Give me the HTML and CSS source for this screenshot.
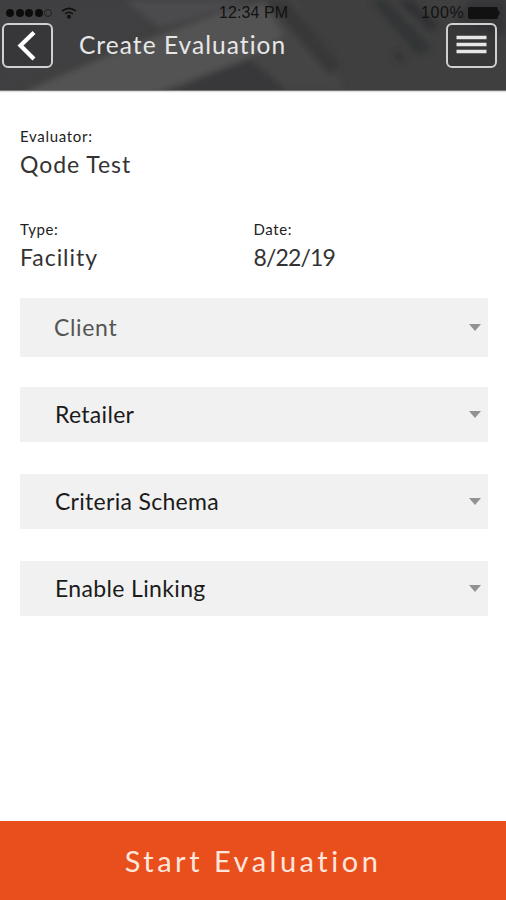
FILE: index.html
```html
<!DOCTYPE html>
<html lang="en">
<head>
<meta charset="utf-8">
<title>Create Evaluation</title>
<link rel="stylesheet" href="styles.css">
</head>
<body>
<header class="header">
  <svg class="backdrop" viewBox="0 0 506 90" preserveAspectRatio="none" aria-hidden="true">
    <defs><filter id="soft"><feGaussianBlur stdDeviation="3"/></filter></defs>
    <rect width="506" height="90" fill="#3f3f40"/>
    <g filter="url(#soft)">
      <path d="M0 0H130L145 27L60 68L0 92Z" fill="#414142"/>
      <path d="M125 0H250L195 18L160 28Z" fill="#4b4b4d"/>
      <path d="M28 90L120 50L222 12L268 2L284 36L250 58L170 88L150 96H28Z" fill="#525252"/>
      <path d="M165 96L215 72L250 58L290 96Z" fill="#38393b"/>
      <path d="M262 0H295L345 90H290L250 60L284 36Z" fill="#444445"/>
      <path d="M265 0L288 0L340 65L330 75Z" fill="#373738"/>
      <path d="M370 0H386L432 48L418 56Z" fill="#333536"/>
      <path d="M396 0H412L440 26L430 32Z" fill="#333334"/>
      <path d="M398 50L405 60L400 63L394 56Z" fill="#303031"/>
      <path d="M470 0H506V36L455 22Z" fill="#363637"/>
    </g>
  </svg>
  <div class="status">
    <span class="signal"><i></i><i></i><i></i><i></i><i class="empty"></i></span>
    <svg class="wifi" viewBox="0 0 16 12" aria-hidden="true">
      <path d="M1 4.2Q8-1.5 15 4.2M4 7Q8 3.6 12 7" fill="none" stroke="#111" stroke-width="1.6"/>
      <circle cx="8" cy="9.7" r="2" fill="#111"/>
    </svg>
    <span class="clock">12:34 PM</span>
    <span class="percent">100%</span>
    <svg class="battery" viewBox="0 0 34 12" aria-hidden="true">
      <rect width="30" height="12" rx="2" fill="#111"/><path d="M30 3Q33.500 6 30 9Z" fill="#111"/>
    </svg>
  </div>
  <div class="toolbar">
    <button class="icon-button" aria-label="Back">
      <svg viewBox="0 0 51 45" aria-hidden="true"><path d="M32 9.500L18.500 22.500L32 36" fill="none" stroke="#fff" stroke-width="4.200"/></svg>
    </button>
    <h1 class="title">Create Evaluation</h1>
    <button class="icon-button" aria-label="Menu">
      <svg viewBox="0 0 51 45" aria-hidden="true"><path d="M10.500 14.500H40.500M10.500 21.500H40.500M10.500 28.500H40.500" fill="none" stroke="#e6e6e6" stroke-width="3.500"/></svg>
    </button>
  </div>
</header>
<main class="content">
  <div class="field"><div class="label evaluator">Evaluator:</div><div class="value name">Qode Test</div></div>
  <div class="row">
    <div class="field"><div class="label">Type:</div><div class="value facility">Facility</div></div>
    <div class="field"><div class="label">Date:</div><div class="value date">8/22/19</div></div>
  </div>
  <div class="selects">
    <div class="select client"><span>Client</span><b class="caret"></b></div>
    <div class="select retailer"><span>Retailer</span><b class="caret"></b></div>
    <div class="select criteria"><span>Criteria Schema</span><b class="caret"></b></div>
    <div class="select linking"><span>Enable Linking</span><b class="caret"></b></div>
  </div>
</main>
<button class="start"><span>Start Evaluation</span></button>
</body>
</html>
```
FILE: styles.css
```css
* { box-sizing: border-box; }
body {
  margin: 0;
  width: 506px;
  height: 900px;
  display: flex;
  flex-direction: column;
  overflow: hidden;
  background: #fff;
  color: #333;
  font-family: Lato, sans-serif;
}
button { padding: 0; font: inherit; }
.header {
  position: relative;
  height: 91px;
  flex: none;
  border-bottom: 1px solid #777;
  background: #3f3f40;
  box-shadow: 0 1px 1px #ddd;
}
.backdrop { position: absolute; inset: 0; width: 506px; height: 90px; }
.status {
  position: relative;
  height: 23px;
  padding: 2px 3px 0 6px;
  display: flex;
  align-items: center;
  color: #111;
  font-family: "Liberation Sans", sans-serif;
  font-size: 16px;
}
.signal { display: flex; gap: 1.500px; width: 55px; }
.signal i { width: 8px; height: 8px; border-radius: 50%; background: #0c0c0c; }
.signal .empty { background: none; border: 1px solid #222; }
.wifi { width: 16px; height: 12px; }
.clock { margin-left: 142px; width: 202px; letter-spacing: 0.1px; }
.percent { width: 47px; letter-spacing: 0.600px; }
.battery { width: 34px; height: 12px; }
.toolbar { position: relative; display: flex; padding: 0 9px 0 2px; }
.icon-button {
  width: 51px;
  height: 45px;
  border: 2px solid #d0d0d0;
  border-radius: 6px;
  background: rgba(40, 40, 42, 0.35);
  flex: none;
}
.icon-button svg { display: block; width: 51px; height: 45px; margin: -2px; }
.title {
  flex: 1;
  margin: 0 0 0 26px;
  font-size: 24.500px;
  line-height: 43px;
  font-weight: 400;
  letter-spacing: 1.050px;
  white-space: nowrap;
  color: #e7e7e7;
}
.content { flex: 1; padding: 35px 18px 0 20px; }
.label { font-size: 15px; line-height: 20px; color: #222; letter-spacing: 0.600px; }
.evaluator { letter-spacing: 0.7px; }
.value { font-size: 23px; line-height: 36px; color: #333; letter-spacing: 0.950px; }
.date { letter-spacing: -0.850px; }
.row { display: grid; grid-template-columns: 233.500px 1fr; margin-top: 37px; }
.selects { margin-top: 23px; }
.select {
  height: 55px;
  margin-bottom: 32px;
  padding: 0 7px 0 35px;
  display: flex;
  align-items: center;
  justify-content: space-between;
  background: #f1f1f1;
  color: #1b1b1b;
  font-size: 23px;
  letter-spacing: 0.300px;
}
.select span { padding-bottom: 2px; }
.client { height: 59px; margin-bottom: 30px; padding-left: 34px; color: #555; letter-spacing: 0.650px; }
.linking { letter-spacing: 0.350px; }
.caret { border: 6.500px solid transparent; border-top: 7px solid #929292; border-bottom: 0; }
.start {
  height: 79px;
  flex: none;
  border: 0;
  background: #e94f1d;
  color: #ffe6dc;
  font-size: 29px;
  letter-spacing: 3.500px;
}
```
